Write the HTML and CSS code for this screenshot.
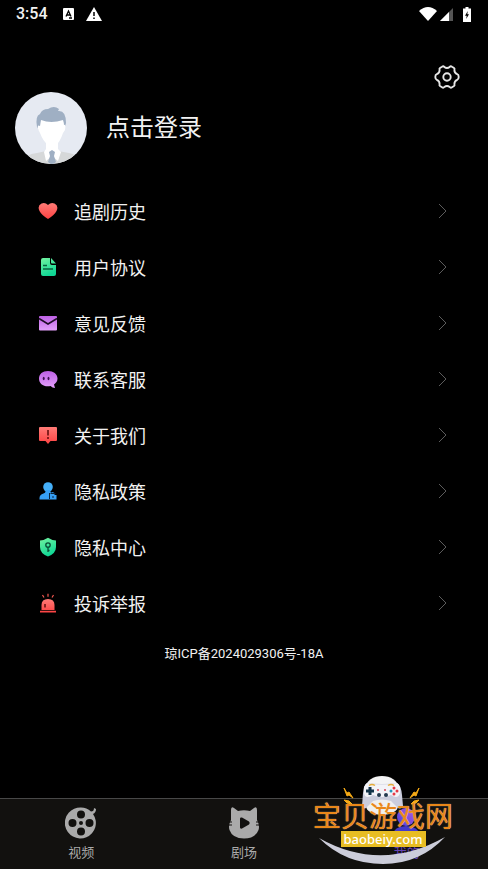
FILE: index.html
```html
<!DOCTYPE html>
<html lang="zh-CN">
<head>
<meta charset="utf-8">
<meta name="viewport" content="width=device-width, initial-scale=1">
<title>我的</title>
<link rel="stylesheet" href="styles.css">
</head>
<body>
<svg class="defs" width="0" height="0" aria-hidden="true">
  <defs>
    <linearGradient id="red" x1="0" y1="0" x2="0" y2="1"><stop offset="0" stop-color="#ff7b76"/><stop offset="1" stop-color="#fc4242"/></linearGradient>
    <linearGradient id="green" x1="0" y1="0" x2="0.4" y2="1"><stop offset="0" stop-color="#74f3a0"/><stop offset="1" stop-color="#10d795"/></linearGradient>
    <linearGradient id="purple" x1="0" y1="0" x2="0" y2="1"><stop offset="0" stop-color="#bd60e5"/><stop offset="1" stop-color="#e3a0fb"/></linearGradient>
    <linearGradient id="violet" x1="1" y1="0" x2="0" y2="1"><stop offset="0" stop-color="#b65bdc"/><stop offset="1" stop-color="#4540dd"/></linearGradient>
  </defs>
</svg>
<div class="screen">
  <div class="status">
    <div class="status-group">
      <span class="time">3:54</span>
      <svg width="11" height="12" viewBox="0 0 11 12"><rect width="11" height="12" rx="1" fill="#fff"/><path d="M3 8.500 5.500 3 8 8.500M4 7h3M6 10h3" fill="none" stroke="#000" stroke-width="1.300"/></svg>
      <svg width="16" height="14" viewBox="0 0 16 14"><path d="M8 0 16 14H0Z" fill="#fff"/><path d="M8 5v4M8 10.500v1.500" stroke="#000" stroke-width="1.500"/></svg>
    </div>
    <div class="status-group status-right">
      <svg width="18" height="14" viewBox="0 0 18 14"><path d="M0 4Q9-4 18 4L9 14Z" fill="#fff"/></svg>
      <svg width="13" height="13" viewBox="0 0 13 13"><path d="M0 13 13 0V13Z" fill="#555"/><path d="M0 13 9 4V13Z" fill="#fff"/></svg>
      <svg class="battery" width="8" height="15" viewBox="0 0 8 15"><path d="M2.500 0h3v1.500H8V15H0V1.500h2.500Z" fill="#fff"/><path d="M4.800 4 2 8.800h1.700L3.200 12 6 7.300H4.300Z" fill="#000"/></svg>
    </div>
  </div>
  <main>
    <div class="tools">
      <button class="settings" aria-label="设置">
        <svg width="26" height="26" viewBox="0 0 26 26" fill="none" stroke="#e6e6e6" stroke-width="1.900" stroke-linejoin="round"><path d="M10.300 3Q13 5 15.700 3Q16.600 1.800 18 2.800L20 4Q20.900 4.700 20.400 6Q20.300 9 23.200 10.200Q24.700 10.700 24.700 13Q24.700 15.300 23.200 15.800Q20.300 17 20.400 20Q20.900 21.300 20 22L18 23.200Q16.600 24.200 15.700 23Q13 21 10.300 23Q9.400 24.200 8 23.200L6 22Q5.100 21.300 5.600 20Q5.700 17 2.800 15.800Q1.300 15.300 1.300 13Q1.300 10.700 2.800 10.200Q5.700 9 5.600 6Q5.100 4.700 6 4L8 2.800Q9.400 1.800 10.300 3Z"/><circle cx="13" cy="13" r="3.700"/></svg>
      </button>
    </div>
    <a class="profile" href="#login">
      <svg width="72" height="72" viewBox="0 0 72 72">
        <defs><clipPath id="face"><circle cx="36" cy="36" r="36"/></clipPath></defs>
        <g clip-path="url(#face)">
          <path fill="#e6eaf2" d="M0 0h72v72H0z"/>
          <path fill="#d6d8d9" d="M6 72Q10 62 22 61L31 59H43L54 61Q62 62 67 72Z"/>
          <path fill="#fff" d="M31 51h12v6l3 3-3 9-6-5-6 5-2-9 2-3Z"/>
          <path fill="#9fafc3" d="m34 60 3-2 3 2-1 4 2 6-4 3-4-3 2-6Z"/>
          <path fill="#9fafc3" d="M22 35Q20 24 25 22Q27 17 33 17Q39 13 44 17L43 19Q51 18 51 31L49 38H24Z"/>
          <path fill="#fff" d="M26 28Q36 32 48 28Q49 31 49 33Q51 32 50 38L48 41Q45 50 41 53Q37 55 33 53Q28 49 25 41L23 37Q22 32 25 34Z"/>
        </g>
      </svg>
      <span>点击登录</span>
    </a>
    <nav class="menu" aria-label="功能">
      <a href="#history"><svg class="icon" viewBox="0 0 20 20"><path fill="url(#red)" d="M10 4Q13 .8 16.500 2.500Q21 5 18.500 10Q16.500 14 10 18Q3.500 14 1.500 10Q-1 5 3.500 2.500Q7 .8 10 4Z"/></svg><span>追剧历史</span><svg class="chevron" viewBox="0 0 10 16"><path d="m1 1 7 7-7 7"/></svg></a>
      <a href="#agreement"><svg class="icon" viewBox="0 0 20 20"><path fill="url(#green)" d="M5 1h7v5q0 2 2 2h4v9q0 2-2 2H5q-2 0-2-2V3q0-2 2-2Zm8 0 5 5.500h-4q-1 0-1-1Z"/><path d="M5 8.500h4M5 12h10" stroke="#08613e" stroke-width="1.300"/></svg><span>用户协议</span><svg class="chevron" viewBox="0 0 10 16"><path d="m1 1 7 7-7 7"/></svg></a>
      <a href="#feedback"><svg class="icon" viewBox="0 0 20 20"><rect x="1" y="3" width="18" height="14.500" rx="1" fill="url(#purple)"/><path d="m1 5.500 9 5.500 9-5.500" fill="none" stroke="#210d2a" stroke-width="1.500"/></svg><span>意见反馈</span><svg class="chevron" viewBox="0 0 10 16"><path d="m1 1 7 7-7 7"/></svg></a>
      <a href="#service"><svg class="icon" viewBox="0 0 20 20"><path fill="url(#purple)" d="M10 2c5.500 0 9.500 3 9.500 7.500 0 3-1.500 4.500-3.500 6l1 3.500q-2.500 0-4.500-2C6 18.300 1 15 1 9.500 1 5 4.500 2 10 2Z"/><ellipse cx="5.700" cy="9.500" rx="1" ry="1.700" fill="#401055"/><ellipse cx="10.500" cy="9.500" rx="1" ry="1.700" fill="#401055"/></svg><span>联系客服</span><svg class="chevron" viewBox="0 0 10 16"><path d="m1 1 7 7-7 7"/></svg></a>
      <a href="#about"><svg class="icon" viewBox="0 0 20 20"><path fill="url(#red)" d="M2 2h16q1 0 1 1v12q0 1-1 1h-5.500L10 19l-2.500-3H2q-1 0-1-1V3q0-1 1-1Z"/><path d="M10 5v5.500M10 12v2" stroke="#5e0909" stroke-width="1.500"/></svg><span>关于我们</span><svg class="chevron" viewBox="0 0 10 16"><path d="m1 1 7 7-7 7"/></svg></a>
      <a href="#policy"><svg class="icon" viewBox="0 0 20 20"><circle cx="10" cy="6" r="4.800" fill="#45b0fa"/><path fill="#369ff5" d="M7.500 9h5v2q1 1 2 0l2 1v2h2v4.500h-17V17q0-3.500 4-4.500 2-.6 2-2Z"/><path d="M11.500 18v-6M12.500 12.500h5M15 15v2" stroke="#09243c" stroke-width="1"/></svg><span>隐私政策</span><svg class="chevron" viewBox="0 0 10 16"><path d="m1 1 7 7-7 7"/></svg></a>
      <a href="#privacy"><svg class="icon" viewBox="0 0 20 20"><path fill="url(#green)" d="M10 .8Q14 3.500 18 3.500V10q0 6.500-8 9.500-8-3-8-9.500V3.500Q6 3.500 10 .8Z"/><circle cx="10" cy="8" r="2.200" fill="none" stroke="#084c34" stroke-width="1.300"/><path d="M10 10v5m0-1.500h1.500" stroke="#084c34" stroke-width="1.300"/></svg><span>隐私中心</span><svg class="chevron" viewBox="0 0 10 16"><path d="m1 1 7 7-7 7"/></svg></a>
      <a href="#report"><svg class="icon" viewBox="0 0 20 20"><path fill="url(#red)" d="M3.500 17v-5q0-6 6.500-6t6.500 6v5ZM2 17.800h16v1.700H2Z"/><path d="M10 .8v3M4.500 2l1.500 2.500M15.500 2 14 4.500" stroke="#f55750" stroke-width="1.200"/><path d="M7 11v3.500" stroke="#610b0b" stroke-width="1.500"/></svg><span>投诉举报</span><svg class="chevron" viewBox="0 0 10 16"><path d="m1 1 7 7-7 7"/></svg></a>
    </nav>
    <p class="record">琼ICP备2024029306号-18A</p>
  </main>
  <footer>
    <nav class="tabs" aria-label="主导航">
      <a href="#video"><svg width="32" height="32" viewBox="0 0 32 32"><path fill="#aaa" fill-rule="evenodd" d="M16 0.500a15.500 15.500 0 0 1 10 4q3 0 3-3.500l2 1q0 3.500-3 5A15.500 15.500 0 1 1 16 .5ZM16 3.500a4 4 0 1 0 0 8 4 4 0 0 0 0-8ZM7.500 12a4 4 0 1 0 0 8 4 4 0 0 0 0-8Zm17 0a4 4 0 1 0 0 8 4 4 0 0 0 0-8ZM16 20.500a4 4 0 1 0 0 8 4 4 0 0 0 0-8Zm0-6.500a2 2 0 1 0 0 4 2 2 0 0 0 0-4Z"/></svg><span>视频</span></a>
      <a href="#theater"><svg width="32" height="32" viewBox="0 0 32 32"><path fill="#aaa" d="M3 3Q3-1 6 1l4 3q6-1.500 12 0l4-3q3-2 3 2v10q3 5 1.500 10-3 8.500-14.500 8.500T1.500 23Q0 18 3 13Z"/><path fill="#12110f" d="M12 11.500v9q0 1.500 2 1l7-4q1.500-1.500 0-3l-7-4q-2-.5-2 1Z"/><path d="M0 15h4m-4 3h4M28 15h4m-4 3h4" stroke="#12110f"/></svg><span>剧场</span></a>
      <a class="active" href="#mine" aria-current="page"><svg width="32" height="32" viewBox="0 0 32 32"><circle cx="15" cy="10" r="9" fill="url(#violet)"/><path d="M1 29q2-10 14-10t15 10Z" fill="#443acb"/></svg><span>我的</span></a>
    </nav>
    <div class="watermark">
      <svg class="art" viewBox="0 0 142 90" aria-hidden="true">
        <ellipse cx="70" cy="12" rx="16" ry="11" fill="#f4f4f5"/><ellipse cx="70" cy="31" rx="16" ry="9" fill="#efefef"/>
        <path d="M55 8Q70 10 85 8Q89 10 90 20L91 31Q88 36 84 31L79 26Q70 23 61 26L56 31Q52 36 50 31L51 18Q52 10 55 8Z" fill="#cbcddd"/>
        <path d="M55 8Q70 11 85 8Q89 10 88 18Q86 25 79 20Q70 24 61 20Q53 25 52 18Q51 10 55 8Z" fill="#f3f3f8"/>
        <path d="M57 10.500q3-2 6 0m13 0q3-2 6 0" stroke="#e5ad3b" stroke-width="1.500" fill="none"/>
        <path d="M58 12v8m-4-4h8" stroke="#123348" stroke-width="3"/>
        <circle cx="67" cy="20" r="2" fill="#243a50"/><circle cx="74" cy="20" r="2" fill="#243a50"/>
        <path d="M65 15h2m5 0h2" stroke="#d34a57" stroke-width="1.500"/>
        <circle cx="82" cy="13" r="1.500" fill="#e43844"/><circle cx="82" cy="19" r="1.500" fill="#e43844"/><circle cx="79" cy="16" r="1.500" fill="#2597bb"/><circle cx="85" cy="16" r="1.500" fill="#e43844"/>
        <path d="m32 13 3 5 2-1 4 6-4-3-2 1ZM32 25l5 1 3 3-5-1ZM107 13l-3 5-2-1-4 6 4-3 2 1ZM107 25l-5 1-3 3 5-1Z" fill="#f5aa16" stroke="#f5aa16"/>
        <path d="M7 63Q69 98 133 62Q108 89 71 89Q33 89 7 63Z" fill="#cccdda"/>
      </svg>
      <span class="brand">宝贝游戏网</span>
      <span class="domain">baobeiy.com</span>
    </div>
  </footer>
</div>
</body>
</html>
```
FILE: styles.css
```css
* { box-sizing: border-box; }
body {
  margin: 0;
  background: #000;
  color: #f2f2f2;
  font-family: Roboto, "Noto Sans CJK SC", sans-serif;
}
svg { display: block; flex: none; }
a { color: inherit; text-decoration: none; }
.defs { position: absolute; }
.screen { min-height: 100vh; display: flex; flex-direction: column; }
.status {
  height: 28px;
  padding: 0 17px 0 16px;
  display: flex;
  align-items: center;
  justify-content: space-between;
}
.status-group { display: flex; align-items: center; gap: 12px; }
.status-right { gap: 3px; }
.battery { margin-left: 7px; }
.time { font-size: 16px; line-height: 28px; font-weight: 500; margin-right: 3px; }
main { flex: 1; }
.tools { display: flex; justify-content: flex-end; padding: 36px 28px 0; }
.settings { border: 0; padding: 0; background: none; cursor: pointer; }
.profile {
  display: flex;
  align-items: center;
  gap: 19px;
  margin-top: 2px;
  padding: 0 15px;
  font-size: 24px;
  line-height: 32px;
}
.menu { padding: 19px 40px 0 38px; }
.menu a {
  height: 56px;
  display: flex;
  align-items: center;
  gap: 16px;
  font-size: 18px;
}
.menu span { flex: 1; }
.icon { width: 20px; height: 20px; }
.chevron { width: 10px; height: 16px; fill: none; stroke: #5c5c5c; stroke-width: 1; }
.record { margin: 12px 0; text-align: center; font-size: 13px; line-height: 22px; }
footer { position: relative; height: 71px; background: #12110f; border-top: 1px solid #484848; }
.tabs { display: grid; grid-template-columns: repeat(3, 1fr); padding-top: 8px; }
.tabs a {
  display: flex;
  flex-direction: column;
  align-items: center;
  gap: 4px;
  color: #aaa;
  font-size: 13px;
  line-height: 20px;
}
.tabs .active { color: #6544b4; }
.watermark {
  position: absolute;
  right: 34px;
  bottom: 4px;
  width: 142px;
  height: 90px;
  padding-top: 30px;
  display: flex;
  flex-direction: column;
  align-items: center;
  pointer-events: none;
}
.art { position: absolute; inset: 0; }
.brand {
  position: relative;
  font-size: 28px;
  line-height: 26px;
  font-weight: 400;
  color: #e98719;
  white-space: nowrap;
  text-shadow: 0 0 1px #ffe0b0;
}
.domain {
  position: relative;
  padding: 0 3px;
  background: #e8bd23;
  color: #fff;
  font: 500 13px/16px "Noto Sans", sans-serif;
}
```
